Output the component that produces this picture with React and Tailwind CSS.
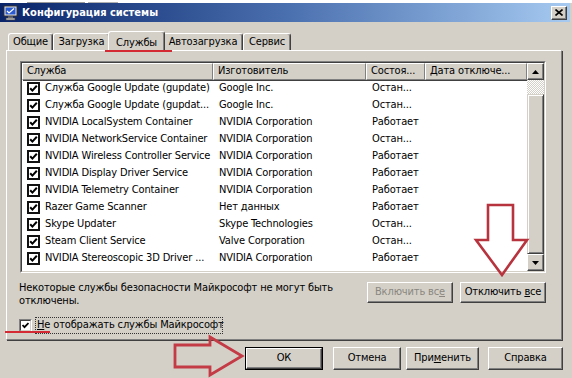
const rows = [
  ['Служба Google Update (gupdate)', 'Google Inc.', 'Остан...'],
  ['Служба Google Update (gupdat...', 'Google Inc.', 'Остан...'],
  ['NVIDIA LocalSystem Container', 'NVIDIA Corporation', 'Работает'],
  ['NVIDIA NetworkService Container', 'NVIDIA Corporation', 'Остан...'],
  ['NVIDIA Wireless Controller Service', 'NVIDIA Corporation', 'Работает'],
  ['NVIDIA Display Driver Service', 'NVIDIA Corporation', 'Работает'],
  ['NVIDIA Telemetry Container', 'NVIDIA Corporation', 'Работает'],
  ['Razer Game Scanner', 'Нет данных', 'Работает'],
  ['Skype Updater', 'Skype Technologies', 'Остан...'],
  ['Steam Client Service', 'Valve Corporation', 'Остан...'],
  ['NVIDIA Stereoscopic 3D Driver ...', 'NVIDIA Corporation', 'Работает'],
];

const tabs = [
  { label: 'Общие', w: 'w-[45px]' },
  { label: 'Загрузка', w: 'w-[57px]' },
  { label: 'Службы', w: 'w-[57px]', active: true },
  { label: 'Автозагрузка', w: 'w-[80px]' },
  { label: 'Сервис', w: 'w-[48px]' },
];

const Check = () => (
  <svg width="9" height="9" viewBox="0 0 9 9">
    <polyline points="1.2,4.2 3.4,6.6 7.8,1.8" fill="none" stroke="#000" strokeWidth="2" />
  </svg>
);

const Btn = ({ children, className = '', disabled = false, isDefault = false }) => (
  <div className={`${isDefault ? 'border border-black' : ''} ${className}`}>
    <div
      className={`h-full w-full bg-[#d4d0c8] border-t border-l border-white border-r border-b border-r-[#404040] border-b-[#404040] shadow-[inset_-1px_-1px_0_#808080] flex items-center justify-center ${
        disabled ? 'text-[#8a8780]' : 'text-black'
      }`}
    >
      {children}
    </div>
  </div>
);

const HeaderCell = ({ children, w }) => (
  <div
    className={`${w} h-full shrink-0 border-t border-l border-white border-r border-b border-r-[#808080] border-b-[#808080] shadow-[1px_1px_0_#404040] pl-[4px] flex items-center overflow-hidden whitespace-nowrap`}
  >
    {children}
  </div>
);

const ScrollBtn = ({ up }) => (
  <div className="w-[17px] h-[17px] bg-[#d4d0c8] border-t border-l border-white border-r border-b border-r-[#404040] border-b-[#404040] shadow-[inset_-1px_-1px_0_#808080] flex items-center justify-center">
    <svg width="7" height="4" viewBox="0 0 7 4">
      {up ? <polygon points="3.5,0 7,4 0,4" fill="#000" /> : <polygon points="0,0 7,0 3.5,4" fill="#000" />}
    </svg>
  </div>
);

export default function App() {
  return (
    <div className="relative w-[572px] h-[378px] overflow-hidden bg-[#d4d0c8] text-[11px] tracking-[-0.15px] text-black font-['DejaVu_Sans_Condensed','Liberation_Sans',sans-serif] [font-stretch:condensed] flex flex-col">
      {/* sliver of the window behind */}
      <div className="h-[3px] bg-white shrink-0 flex items-end pl-[27px] gap-[3px]">
        <div className="w-[58px] h-[1px] bg-[#9a9a9a]" />
        <div className="w-[30px] h-[1px] bg-[#b0b0b0]" />
      </div>

      {/* title bar */}
      <div className="h-[19px] w-[570px] shrink-0 bg-gradient-to-r from-[#0a246a] via-[#4a6fae] to-[#a6caf0] flex items-center pl-[3px] pr-[3px]">
        <svg width="16" height="16" viewBox="0 0 16 16" className="shrink-0">
          <rect x="1" y="1" width="13" height="10" fill="#e8e8e8" stroke="#303030" strokeWidth="1" />
          <rect x="2.5" y="2.5" width="10" height="7" fill="#2a5bd0" />
          <path d="M4 6 L6 8 L11 3.5" fill="none" stroke="#fff" strokeWidth="1.2" />
          <rect x="5" y="11.5" width="5" height="1.5" fill="#808080" />
          <rect x="3" y="13" width="9" height="2" fill="#c0c0c0" stroke="#404040" strokeWidth="0.6" />
        </svg>
        <span className="ml-[3px] text-white font-bold text-[11px] tracking-normal leading-none whitespace-nowrap">Конфигурация системы</span>
        <div className="ml-auto w-[16px] h-[14px] bg-[#d4d0c8] border-t border-l border-white border-r border-b border-r-[#404040] border-b-[#404040] shadow-[inset_-1px_-1px_0_#808080] flex items-center justify-center">
          <svg width="8" height="7" viewBox="0 0 8 7">
            <path d="M0.5 0.5 L7.5 6.5 M7.5 0.5 L0.5 6.5" stroke="#000" strokeWidth="1.6" />
          </svg>
        </div>
      </div>

      {/* tabs */}
      <div className="mt-[9px] h-[19px] shrink-0 flex items-end pl-[8px]">
        {tabs.map((t) =>
          t.active ? (
            <div
              key={t.label}
              className={`${t.w} -mx-[2px] h-[21px] -mb-[2px] relative z-10 bg-[#d4d0c8] border-t border-l border-white border-r border-r-[#404040] shadow-[inset_-1px_0_0_#808080] rounded-t-[3px] flex items-start justify-center pt-[3px] whitespace-nowrap`}
            >
              {t.label}
            </div>
          ) : (
            <div
              key={t.label}
              className={`${t.w} h-[17px] bg-[#d4d0c8] border-t border-l border-white border-r border-r-[#404040] shadow-[inset_-1px_0_0_#808080] rounded-t-[3px] flex items-center justify-center whitespace-nowrap`}
            >
              {t.label}
            </div>
          )
        )}
      </div>

      {/* tab page */}
      <div className="ml-[6px] w-[556px] h-[290px] shrink-0 border-t border-l border-white border-r border-b border-r-[#808080] border-b-[#808080] shadow-[1px_1px_0_#404040] pl-[13px] pt-[10px] flex flex-col">
        {/* list view */}
        <div className="w-[526px] h-[212px] border border-t-[#808080] border-l-[#808080] border-r-white border-b-white">
          <div className="w-full h-full border border-t-[#404040] border-l-[#404040] border-r-[#d4d0c8] border-b-[#d4d0c8] bg-white flex">
            <div className="w-[505px] flex flex-col">
              <div className="h-[17px] flex bg-[#d4d0c8]">
                <HeaderCell w="w-[191px]">Служба</HeaderCell>
                <HeaderCell w="w-[153px]">Изготовитель</HeaderCell>
                <HeaderCell w="w-[59px]">Состоя...</HeaderCell>
                <HeaderCell w="w-[102px]">Дата отключе...</HeaderCell>
              </div>
              {rows.map(([name, maker, state]) => (
                <div key={name} className="h-[17px] flex items-center whitespace-nowrap">
                  <div className="w-[191px] shrink-0 flex items-center pl-[5px] overflow-hidden">
                    <div className="w-[13px] h-[13px] shrink-0 border-2 border-[#111] bg-white flex items-center justify-center">
                      <Check />
                    </div>
                    <span className="ml-[5px]">{name}</span>
                  </div>
                  <div className="w-[153px] shrink-0 pl-[6px] overflow-hidden">{maker}</div>
                  <div className="w-[59px] shrink-0 pl-[6px] overflow-hidden">{state}</div>
                  <div className="w-[102px] shrink-0" />
                </div>
              ))}
            </div>
            <div className="w-[17px] flex flex-col">
              <ScrollBtn up />
              <div className="h-[14px] bg-[repeating-conic-gradient(#ffffff_0%_25%,#d4d0c8_0%_50%)] bg-[length:2px_2px]" />
              <div className="h-[160px] bg-[#d4d0c8] border-t border-l border-[#d4d0c8] border-r border-b border-r-[#404040] border-b-[#404040] shadow-[inset_1px_1px_0_#ffffff,inset_-1px_-1px_0_#808080]" />
              <ScrollBtn />
            </div>
          </div>
        </div>

        {/* note + buttons */}
        <div className="mt-[8px] w-[526px] flex justify-between">
          <div className="-ml-[1px] w-[345px] leading-[13px]">
            Некоторые службы безопасности Майкрософт не могут быть отключены.
          </div>
          <div className="flex gap-[7px] mt-[1px]">
            <Btn disabled className="w-[86px] h-[21px]">
              <span>
                Включить вс<span className="underline">е</span>
              </span>
            </Btn>
            <Btn className="w-[86px] h-[21px]">
              <span>
                Отключить <span className="underline">в</span>се
              </span>
            </Btn>
          </div>
        </div>

        {/* hide microsoft services */}
        <div className="mt-[10px] h-[17px] flex items-center -ml-[1px]">
          <div className="w-[13px] h-[13px] bg-white border border-t-[#808080] border-l-[#808080] border-r-white border-b-white">
            <div className="w-full h-full border border-t-[#404040] border-l-[#404040] border-r-[#d4d0c8] border-b-[#d4d0c8] flex items-center justify-center">
              <svg width="7" height="7" viewBox="0 0 7 7">
                <polyline points="0.5,3 2.5,5.2 6.5,1" fill="none" stroke="#000" strokeWidth="1.8" />
              </svg>
            </div>
          </div>
          <div className="ml-[3px] w-[188px] h-[17px] border border-dotted border-[#333] flex items-center pl-[1px] whitespace-nowrap">
            <span className="underline">Н</span>е отображать службы Майкрософт
          </div>
        </div>
      </div>

      {/* dialog buttons */}
      <div className="mt-[7px] h-[23px] shrink-0 flex pl-[245px]">
        <Btn isDefault className="w-[78px] h-[23px]">ОК</Btn>
        <Btn className="ml-[10px] w-[68px] h-[23px]">Отмена</Btn>
        <Btn className="ml-[5px] w-[73px] h-[23px]">
          <span>
            При<span className="underline">м</span>енить
          </span>
        </Btn>
        <Btn className="ml-[9px] w-[75px] h-[23px]">Справка</Btn>
      </div>

      {/* red annotations */}
      <div className="absolute left-[105px] top-[50px] w-[67px] h-[2px] bg-[#d42a33] z-20" />
      <div className="absolute left-[5px] top-[331px] w-[45px] h-[2px] bg-[#d42a33] z-20" />
      <svg className="absolute left-0 top-0 z-20 pointer-events-none" width="572" height="378" viewBox="0 0 572 378">
        <polygon
          points="488,205 513,205 513,240 527,240 502,275 476,240 488,240"
          fill="none"
          stroke="#b7343f"
          strokeWidth="2.6"
          strokeLinejoin="miter"
        />
        <polygon
          points="175,345 210,345 210,337 242,356 210,375 210,367 175,367"
          fill="none"
          stroke="#c43a45"
          strokeWidth="2.8"
          strokeLinejoin="miter"
        />
      </svg>
    </div>
  );
}
